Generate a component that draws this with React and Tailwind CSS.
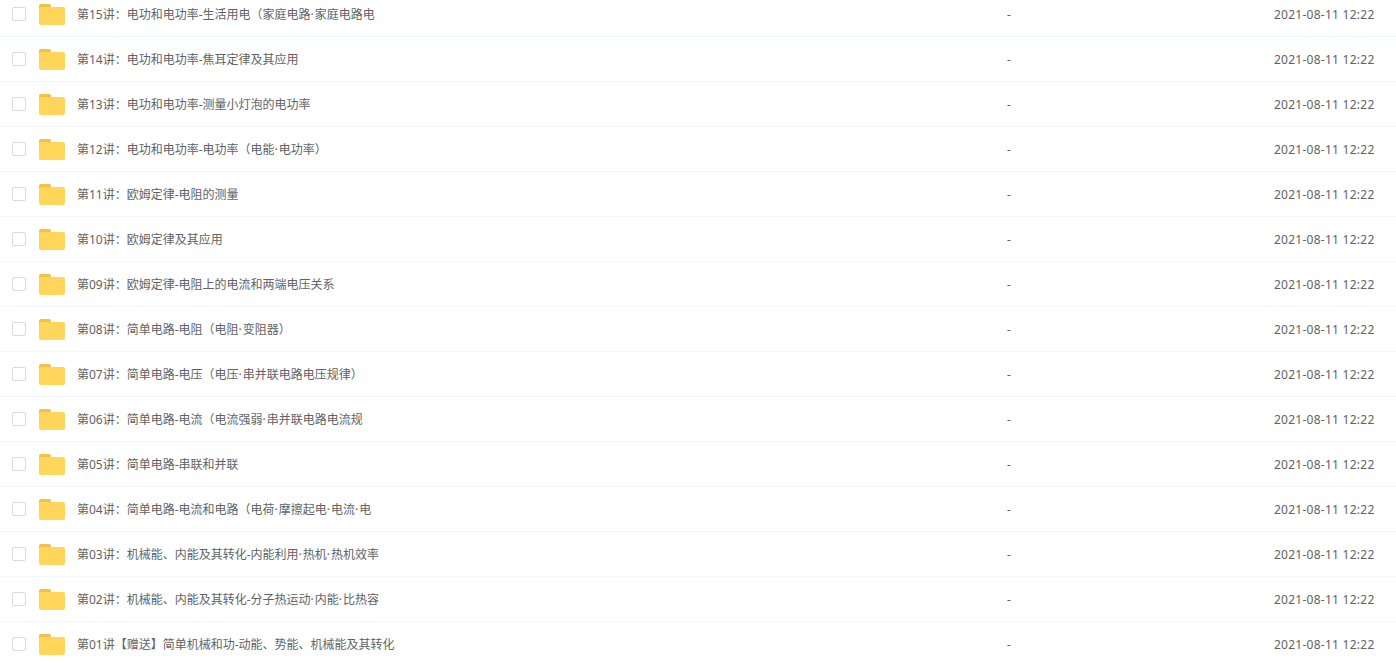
const lessons = [
  "第15讲：电功和电功率-生活用电（家庭电路·家庭电路电",
  "第14讲：电功和电功率-焦耳定律及其应用",
  "第13讲：电功和电功率-测量小灯泡的电功率",
  "第12讲：电功和电功率-电功率（电能·电功率）",
  "第11讲：欧姆定律-电阻的测量",
  "第10讲：欧姆定律及其应用",
  "第09讲：欧姆定律-电阻上的电流和两端电压关系",
  "第08讲：简单电路-电阻（电阻·变阻器）",
  "第07讲：简单电路-电压（电压·串并联电路电压规律）",
  "第06讲：简单电路-电流（电流强弱·串并联电路电流规",
  "第05讲：简单电路-串联和并联",
  "第04讲：简单电路-电流和电路（电荷·摩擦起电·电流·电",
  "第03讲：机械能、内能及其转化-内能利用·热机·热机效率",
  "第02讲：机械能、内能及其转化-分子热运动·内能·比热容",
  "第01讲【赠送】简单机械和功-动能、势能、机械能及其转化",
];

function FolderIcon() {
  return (
    <svg width="26" height="21" viewBox="0 0 26 21" className="shrink-0">
      <path d="M0 2C0 0.9 0.9 0 2 0H9.5C10.8 0 11.8 0.6 12 2V5H0Z" fill="#f0bf4c" />
      <rect x="0" y="3" width="26" height="18" rx="2" fill="#ffd659" />
    </svg>
  );
}

function Title({ text }) {
  // the middle dot sits a little wider in the original
  const parts = text.split("·");
  return parts.map((part, i) => (
    <span key={i}>
      {i > 0 && <span className="tracking-[1px]">·</span>}
      {part}
    </span>
  ));
}

function Row({ title }) {
  return (
    <div className="flex h-[45px] items-center border-b border-[#f2f6fd] text-xs text-[#626262]">
      <span className="ml-3 h-3.5 w-3.5 shrink-0 rounded-[2px] border border-[#d5dbe5] bg-white" />
      <div className="ml-[13px] mt-px">
        <FolderIcon />
      </div>
      <span className="ml-3 mt-[2px] w-[930px] truncate">
        <Title text={title} />
      </span>
      <span className="mt-[2px] w-[267px]">-</span>
      <span className="mt-[2px] tracking-[0.26px]">2021-08-11 12:22</span>
    </div>
  );
}

export default function App() {
  return (
    <div className="h-[663px] overflow-hidden bg-white font-['Noto_Sans','Noto_Sans_CJK_SC',sans-serif]">
      <div className="-mt-[8px]">
        {lessons.map((title) => (
          <Row key={title} title={title} />
        ))}
      </div>
    </div>
  );
}
